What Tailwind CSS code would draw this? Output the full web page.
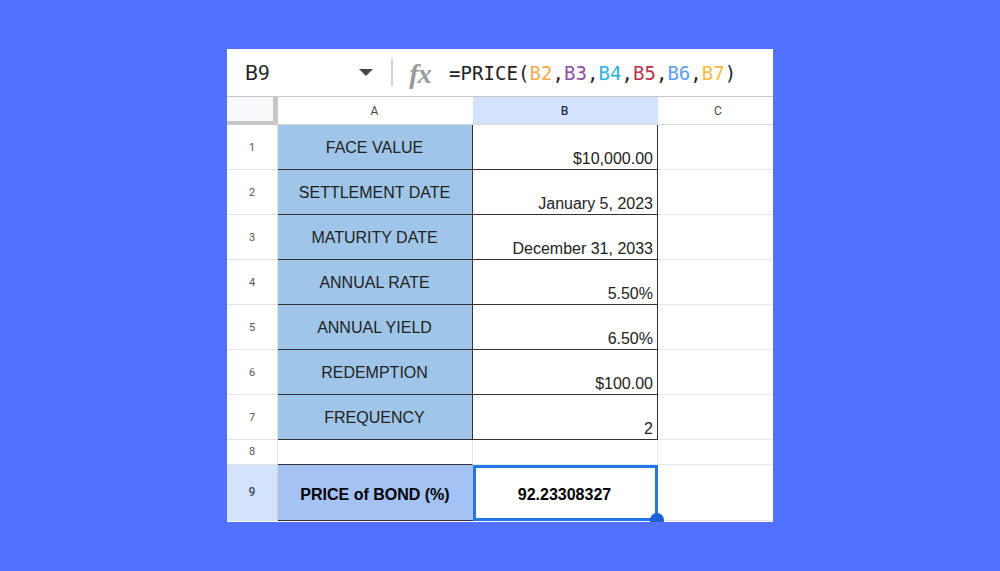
<!DOCTYPE html>
<html lang="en">
<head>
    <meta charset="UTF-8">
    <title>PRICE function in Google Sheets</title>
    <script src="https://cdn.jsdelivr.net/npm/@tailwindcss/browser@4"></script>
</head>
<body class="bg-[#5271ff] w-[1000px] h-[571px] overflow-hidden font-['Liberation_Sans',sans-serif]">
<div class="w-[546px] h-[473px] mt-[49px] ml-[227px] bg-white flex flex-col text-[#222] overflow-hidden">
    <!-- Formula bar -->
    <div class="h-[48px] flex items-center border-b border-[#c7c7c7] shrink-0">
        <div class="w-[132px] pl-[18px] pt-[2px] text-[21px] font-['Roboto',sans-serif]">B9</div>
        <svg class="w-[14px] h-[7px]" viewBox="0 0 14 7"><path d="M0 0h14L7 7z" fill="#444746"/></svg>
        <div class="w-[2px] h-[27px] bg-[#d0d0d0] ml-[18px]"></div>
        <div class="w-[40px] ml-[7px] pt-[2px] text-[#9a9a9a] text-[28px] italic font-bold font-['Liberation_Serif',serif] leading-none tracking-[-1px] text-center">fx</div>
        <div class="ml-[9px] pt-[2px] text-[19px] font-['DejaVu_Sans_Mono',monospace] tracking-[0.05px] whitespace-nowrap">=PRICE(<span class="text-[#f6a94f]">B2</span>,<span class="text-[#8e4fa8]">B3</span>,<span class="text-[#2fb2d6]">B4</span>,<span class="text-[#b8324f]">B5</span>,<span class="text-[#5c9cf0]">B6</span>,<span class="text-[#fbbc3c]">B7</span>)</div>
    </div>
    <!-- Sheet -->
    <div class="grid grid-cols-[51px_195px_185px_115px] grid-rows-[28px_45px_45px_45px_45px_45px_45px_45px_25px_56px] text-[16px]">
        <!-- Column headers -->
        <div class="bg-[#f8f9fa] border-r-[5px] border-b-[4px] border-[#c7c7c7]"></div>
        <div class="flex items-center justify-center pr-[2px] text-[12px] text-[#444746] font-['Roboto',sans-serif] border-b border-[#d9d9d9]">A</div>
        <div class="flex items-center justify-center pr-[2px] text-[12px] font-medium text-[#1f3553] font-['Roboto',sans-serif] bg-[#d3e3fd] border-b border-[#d9d9d9]">B</div>
        <div class="flex items-center justify-center pl-[5px] text-[12px] text-[#444746] font-['Roboto',sans-serif] border-b border-[#d9d9d9]">C</div>

        <!-- Row 1 -->
        <div class="flex items-center justify-center pt-[3px] text-[11px] text-[#555] font-['Roboto',sans-serif] border-b border-r border-[#e1e1e1]">1</div>
        <div class="bg-[#9fc5e8] flex items-center justify-center pt-[2px] pr-[1px] border-b border-r border-[#333]">FACE VALUE</div>
        <div class="flex items-end justify-end pr-[4px] leading-[20px] border-b border-r border-[#333]">$10,000.00</div>
        <div class="border-b border-[#e8e8e8]"></div>

        <!-- Row 2 -->
        <div class="flex items-center justify-center pt-[3px] text-[11px] text-[#555] font-['Roboto',sans-serif] border-b border-r border-[#e1e1e1]">2</div>
        <div class="bg-[#9fc5e8] flex items-center justify-center pt-[2px] pr-[1px] border-b border-r border-[#333]">SETTLEMENT DATE</div>
        <div class="flex items-end justify-end pr-[4px] leading-[20px] border-b border-r border-[#333]">January 5, 2023</div>
        <div class="border-b border-[#e8e8e8]"></div>

        <!-- Row 3 -->
        <div class="flex items-center justify-center pt-[3px] text-[11px] text-[#555] font-['Roboto',sans-serif] border-b border-r border-[#e1e1e1]">3</div>
        <div class="bg-[#9fc5e8] flex items-center justify-center pt-[2px] pr-[1px] border-b border-r border-[#333]">MATURITY DATE</div>
        <div class="flex items-end justify-end pr-[4px] leading-[20px] border-b border-r border-[#333]">December 31, 2033</div>
        <div class="border-b border-[#e8e8e8]"></div>

        <!-- Row 4 -->
        <div class="flex items-center justify-center pt-[3px] text-[11px] text-[#555] font-['Roboto',sans-serif] border-b border-r border-[#e1e1e1]">4</div>
        <div class="bg-[#9fc5e8] flex items-center justify-center pt-[2px] pr-[1px] border-b border-r border-[#333]">ANNUAL RATE</div>
        <div class="flex items-end justify-end pr-[4px] leading-[20px] border-b border-r border-[#333]">5.50%</div>
        <div class="border-b border-[#e8e8e8]"></div>

        <!-- Row 5 -->
        <div class="flex items-center justify-center pt-[3px] text-[11px] text-[#555] font-['Roboto',sans-serif] border-b border-r border-[#e1e1e1]">5</div>
        <div class="bg-[#9fc5e8] flex items-center justify-center pt-[2px] pr-[1px] border-b border-r border-[#333]">ANNUAL YIELD</div>
        <div class="flex items-end justify-end pr-[4px] leading-[20px] border-b border-r border-[#333]">6.50%</div>
        <div class="border-b border-[#e8e8e8]"></div>

        <!-- Row 6 -->
        <div class="flex items-center justify-center pt-[3px] text-[11px] text-[#555] font-['Roboto',sans-serif] border-b border-r border-[#e1e1e1]">6</div>
        <div class="bg-[#9fc5e8] flex items-center justify-center pt-[2px] pr-[1px] border-b border-r border-[#333]">REDEMPTION</div>
        <div class="flex items-end justify-end pr-[4px] leading-[20px] border-b border-r border-[#333]">$100.00</div>
        <div class="border-b border-[#e8e8e8]"></div>

        <!-- Row 7 -->
        <div class="flex items-center justify-center pt-[3px] text-[11px] text-[#555] font-['Roboto',sans-serif] border-b border-r border-[#e1e1e1]">7</div>
        <div class="bg-[#9fc5e8] flex items-center justify-center pt-[2px] pr-[1px] border-b border-r border-[#333]">FREQUENCY</div>
        <div class="flex items-end justify-end pr-[4px] leading-[20px] border-b border-r border-[#333]">2</div>
        <div class="border-b border-[#e8e8e8]"></div>

        <!-- Row 8 -->
        <div class="flex items-center justify-center text-[11px] text-[#555] font-['Roboto',sans-serif] border-b border-r border-[#e1e1e1]">8</div>
        <div class="border-b border-r border-[#333] border-r-[#e8e8e8]"></div>
        <div class="border-b border-r border-[#e8e8e8]"></div>
        <div class="border-b border-[#e8e8e8]"></div>

        <!-- Row 9 -->
        <div class="bg-[#d3e3fd] flex items-center justify-center text-[12px] font-medium text-[#3c4a60] font-['Roboto',sans-serif] border-r border-[#d0d0d0] pb-[3px]">9</div>
        <div class="bg-[#a4c2f4] flex items-center justify-center pt-[4px] pr-[1px] font-bold text-[16px] text-black border-b border-[#333]">PRICE of BOND (%)</div>
        <div class="relative flex items-center justify-center pt-[3px] pr-[2px] font-bold text-[16px] text-black border-[3px] border-[#2277e6]">
            92.23308327
            <div class="absolute -right-[9px] -bottom-[9px] w-[14px] h-[14px] rounded-full bg-[#1a62d6]"></div>
        </div>
        <div class="border-b border-[#e8e8e8]"></div>
    </div>
</div>
</body>
</html>
